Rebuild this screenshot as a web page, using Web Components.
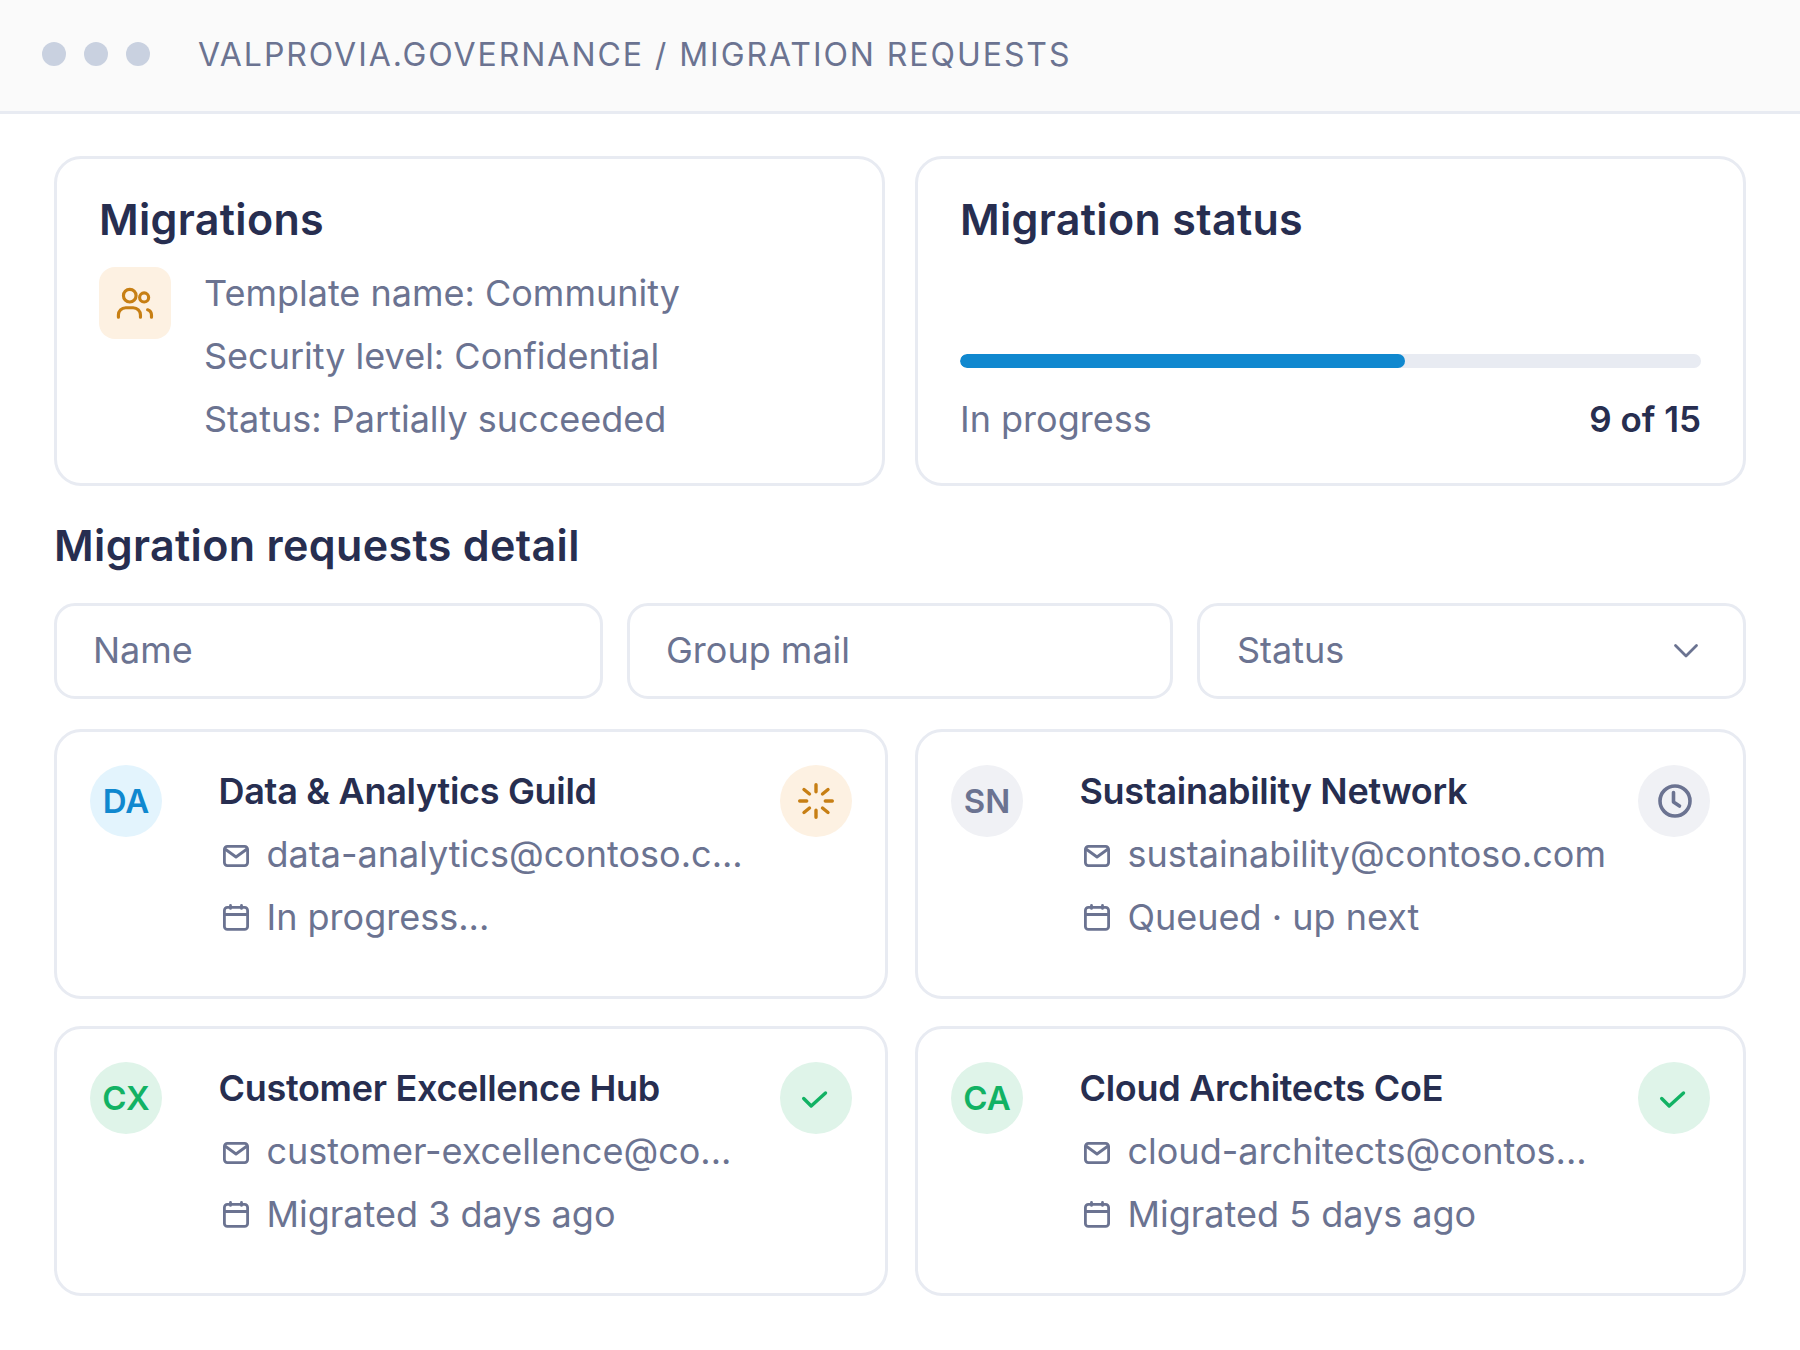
<!DOCTYPE html>
<html>
<head>
<meta charset="utf-8">
<title>Migration requests</title>
<style>
  html, body { margin: 0; background: #fff; }
  body { font-family: Inter, "Liberation Sans", sans-serif; color: #6b7391; }
</style>
</head>
<body>
<migration-page>
  <top-bar slot="bar">VALPROVIA.GOVERNANCE / MIGRATION REQUESTS</top-bar>

  <info-card slot="summary" heading="Migrations">
    <div class="template" style="display:flex;gap:33px">
      <icon-tile></icon-tile>
      <div style="font-size:36px;line-height:63px;margin-top:-5px">
        <div>Template name: Community</div>
        <div>Security level: Confidential</div>
        <div>Status: Partially succeeded</div>
      </div>
    </div>
  </info-card>
  <info-card slot="summary" heading="Migration status">
    <progress-summary value="9" max="15" label="In progress"></progress-summary>
  </info-card>

  <section-title slot="detail">Migration requests detail</section-title>

  <filter-field slot="filters">Name</filter-field>
  <filter-field slot="filters">Group mail</filter-field>
  <filter-field slot="filters" dropdown>Status</filter-field>

  <request-card slot="cards" initials="DA" tone="blue" state="running" name="Data &amp; Analytics Guild" mail="data-analytics@contoso.c..." when="In progress..."></request-card>
  <request-card slot="cards" initials="SN" tone="grey" state="queued" name="Sustainability Network" mail="sustainability@contoso.com" when="Queued · up next"></request-card>
  <request-card slot="cards" initials="CX" tone="green" state="done" name="Customer Excellence Hub" mail="customer-excellence@co..." when="Migrated 3 days ago"></request-card>
  <request-card slot="cards" initials="CA" tone="green" state="done" name="Cloud Architects CoE" mail="cloud-architects@contos..." when="Migrated 5 days ago"></request-card>
</migration-page>

<script>
const icons = {
  people: `<svg width="42" height="42" viewBox="0 0 40 40" fill="none" stroke="#c77f14" stroke-width="3" stroke-linecap="round">
    <circle cx="15" cy="13" r="6"/><circle cx="28.700" cy="14.700" r="4.300"/>
    <path d="M4.200 33.500v-2c0-4 3-7 7-7h7c4 0 7 3 7 7v2"/><path d="M32 26.500c2.500 .8 3.700 3 3.700 5v2"/></svg>`,
  running: `<svg width="40" height="40" viewBox="0 0 40 40" fill="none" stroke="#c77f14" stroke-width="3.400" stroke-linecap="round">
    <path d="M20 3.700v7M20 29.300v7M3.700 20h7M29.300 20h7M8 8.500l5.500 4.500M26.500 27l5.500 4.500M8 31.500l5.500-4.500M26.500 13l5.500-4.500"/></svg>`,
  queued: `<svg width="36" height="36" viewBox="0 0 36 36" fill="none" stroke="#6b7391" stroke-width="3.600" stroke-linecap="round" stroke-linejoin="round">
    <circle cx="19" cy="18" r="15"/><path d="M17.500 9.500V19l6 4"/></svg>`,
  done: `<svg width="32" height="32" viewBox="0 0 32 32" fill="none" stroke="#12b264" stroke-width="3.400" stroke-linecap="round" stroke-linejoin="round">
    <path d="M3.700 16.500l7.500 7.500L25.500 11"/></svg>`,
  mail: `<svg width="30" height="30" viewBox="0 0 30 30" fill="none" stroke="#6b7391" stroke-width="2.800" stroke-linecap="round" stroke-linejoin="round">
    <rect x="3.400" y="7.400" width="23.200" height="19.200" rx="3"/><path d="M4 10l11 8 11-8"/></svg>`,
  calendar: `<svg width="30" height="30" viewBox="0 0 30 30" fill="none" stroke="#6b7391" stroke-width="2.800" stroke-linecap="round" stroke-linejoin="round">
    <rect x="3.400" y="5.400" width="23.200" height="22" rx="3"/><path d="M3.400 12.500h23.200M9.500 3.400v3M20.500 3.400v3"/></svg>`,
  chevron: `<svg width="28" height="28" viewBox="0 0 28 28" fill="none" stroke="#6b7391" stroke-width="2.800" stroke-linecap="round" stroke-linejoin="round">
    <path d="M3.500 8.500L14 19L24.500 8.500"/></svg>`
}

class MigrationPage extends HTMLElement {
  constructor() {
    super()
    this.attachShadow({mode: 'open'})
    this.shadowRoot.innerHTML = `
      <style>
        :host { display: block; width: 1800px; height: 1350px; overflow: hidden; }
        main { padding: 42px 54px 0; }
        .summary { display: grid; grid-template-columns: 831px 831px; gap: 30px; }
        .filters { display: grid; grid-template-columns: 549px 546px 549px; gap: 24px; margin-bottom: 30px; }
        .cards { display: grid; grid-template-columns: 834px 831px; gap: 27px; }
      </style>
      <slot name="bar"></slot>
      <main>
        <div class="summary"><slot name="summary"></slot></div>
        <slot name="detail"></slot>
        <div class="filters"><slot name="filters"></slot></div>
        <div class="cards"><slot name="cards"></slot></div>
      </main>`
  }
}

class TopBar extends HTMLElement {
  constructor() {
    super()
    this.attachShadow({mode: 'open'})
    this.shadowRoot.innerHTML = `
      <style>
        :host { display: flex; box-sizing: border-box; align-items: center; height: 114px; padding: 0 0 3px 42px; background: #fafafa; border-bottom: 3px solid #e8ebf2; font-size: 32px; letter-spacing: 1.940px; color: #6b7391; }
        .dots { display: flex; gap: 18px; margin-right: 48px; }
        i { width: 24px; height: 24px; border-radius: 50%; background: #c9d1e0; }
      </style>
      <div class="dots"><i></i><i></i><i></i></div>
      <slot></slot>`
  }
}

class InfoCard extends HTMLElement {
  constructor() {
    super()
    this.attachShadow({mode: 'open'})
    this.shadowRoot.innerHTML = `
      <style>
        :host { display: block; box-sizing: border-box; height: 330px; padding: 30px 42px 0; border: 3px solid #e8ebf2; border-radius: 27px; }
        h2 { margin: 0 0 18px; font-size: 43px; line-height: 60px; font-weight: 600; color: #272e50; letter-spacing: .33px; }
      </style>
      <h2></h2>
      <slot></slot>`
    this.shadowRoot.querySelector('h2').textContent = this.getAttribute('heading')
  }
}

class IconTile extends HTMLElement {
  constructor() {
    super()
    this.attachShadow({mode: 'open'})
    this.shadowRoot.innerHTML = `
      <style>
        :host { display: flex; flex: none; align-items: center; justify-content: center; width: 72px; height: 72px; border-radius: 16px; background: #fdf1e2; }
      </style>
      ${icons.people}`
  }
}

class ProgressSummary extends HTMLElement {
  constructor() {
    super()
    const value = this.getAttribute('value')
    const max = this.getAttribute('max')
    this.attachShadow({mode: 'open'})
    this.shadowRoot.innerHTML = `
      <style>
        :host { display: block; padding-top: 87px; }
        .track { height: 14px; border-radius: 7px; background: #e8ebf2; overflow: hidden; }
        .fill { height: 100%; border-radius: 7px; background: #1088cf; }
        .row { display: flex; justify-content: space-between; align-items: center; margin-top: 26px; height: 50px; font-size: 36px; }
        b { font-size: 35px; font-weight: 600; color: #272e50; }
      </style>
      <div class="track"><div class="fill" style="width:${value / max * 100}%"></div></div>
      <div class="row"><span>${this.getAttribute('label')}</span><b>${value} of ${max}</b></div>`
  }
}

class SectionTitle extends HTMLElement {
  constructor() {
    super()
    this.attachShadow({mode: 'open'})
    this.shadowRoot.innerHTML = `
      <style>
        :host { display: block; margin: 29px 0 28px; font-size: 43px; line-height: 60px; font-weight: 600; color: #272e50; letter-spacing: .36px; }
      </style>
      <slot></slot>`
  }
}

class FilterField extends HTMLElement {
  constructor() {
    super()
    this.attachShadow({mode: 'open'})
    this.shadowRoot.innerHTML = `
      <style>
        :host { display: flex; box-sizing: border-box; align-items: center; justify-content: space-between; height: 96px; padding: 0 37px 2px; border: 3px solid #e8ebf2; border-radius: 21px; font-size: 36px; color: #6b7391; }
        :host(:not([dropdown])) { padding-left: 36px; }
        svg { margin-right: 6px; margin-top: 2px; }
      </style>
      <slot></slot>
      ${this.hasAttribute('dropdown') ? icons.chevron : ''}`
  }
}

const tones = {
  blue: ['#e3f4fd', '#1088cf'],
  grey: ['#f0f1f5', '#6b7391'],
  green: ['#dff4e9', '#12b264']
}
const states = {
  running: '#fdf1e2',
  queued: '#f0f1f5',
  done: '#dff4e9'
}

class RequestCard extends HTMLElement {
  constructor() {
    super()
    const tone = tones[this.getAttribute('tone')]
    const state = this.getAttribute('state')
    this.attachShadow({mode: 'open'})
    this.shadowRoot.innerHTML = `
      <style>
        :host { display: grid; box-sizing: border-box; grid-template-columns: 72px minmax(0, 1fr) 72px; column-gap: 56.500px; height: 270px; padding: 33px 33px 0; border: 3px solid #e8ebf2; border-radius: 27px; }
        .avatar, .state { display: flex; align-items: center; justify-content: center; width: 72px; height: 72px; border-radius: 50%; }
        .avatar { font-size: 33px; font-weight: 600; }
        .name { font-size: 36px; line-height: 52px; font-weight: 600; color: #272e50; letter-spacing: -.3px; margin: 0 0 5px; }
        .line { display: flex; align-items: center; gap: 16px; height: 63px; font-size: 36px; white-space: nowrap; padding-left: 2px; }
        svg { flex: none; }
      </style>
      <div class="avatar" style="background:${tone[0]};color:${tone[1]}">${this.getAttribute('initials')}</div>
      <div>
        <div class="name">${this.getAttribute('name')}</div>
        <div class="line">${icons.mail}<span>${this.getAttribute('mail')}</span></div>
        <div class="line">${icons.calendar}<span>${this.getAttribute('when')}</span></div>
      </div>
      <div class="state" style="background:${states[state]}">${icons[state]}</div>`
  }
}

customElements.define('migration-page', MigrationPage)
customElements.define('top-bar', TopBar)
customElements.define('info-card', InfoCard)
customElements.define('icon-tile', IconTile)
customElements.define('progress-summary', ProgressSummary)
customElements.define('section-title', SectionTitle)
customElements.define('filter-field', FilterField)
customElements.define('request-card', RequestCard)
</script>
</body>
</html>
